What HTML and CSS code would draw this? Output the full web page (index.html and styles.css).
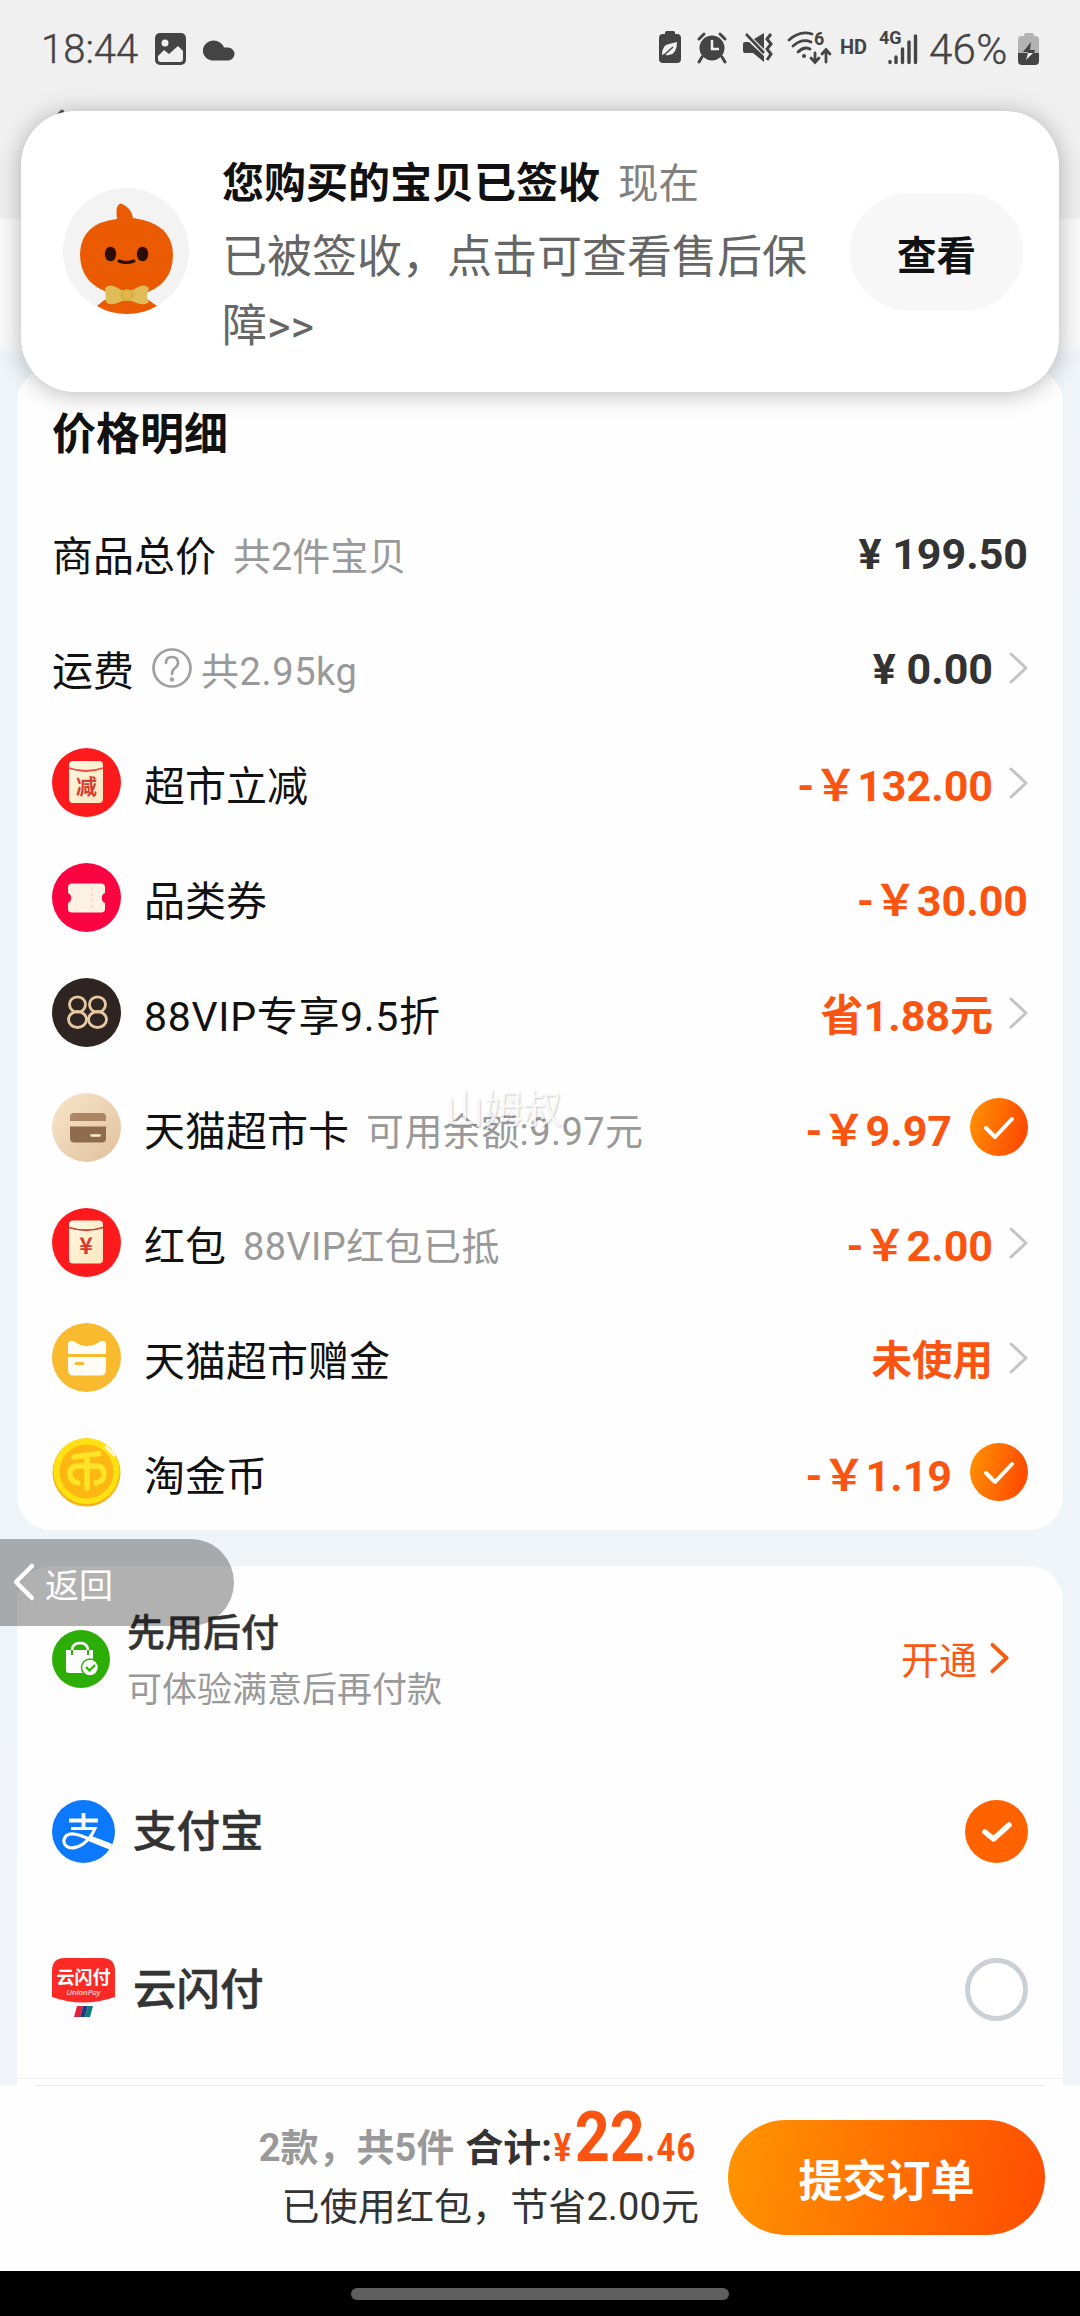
FILE: index.html
```html
<!DOCTYPE html>
<html lang="zh-CN">
<head>
<meta charset="utf-8">
<title>确认订单</title>
<link rel="stylesheet" href="styles.css">
</head>
<body>
<svg width="0" height="0" class="defs">
  <defs>
    <linearGradient id="orange" x1="0" y1="0" x2="1" y2="0.25"><stop offset="0" stop-color="#ff9500"/><stop offset="1" stop-color="#ff4d00"/></linearGradient>
    <linearGradient id="cream" x1="0" y1="0" x2="1" y2="1"><stop offset="0" stop-color="#fff8e4"/><stop offset="1" stop-color="#fbe6bb"/></linearGradient>
    <linearGradient id="beige" x1="0" y1="0" x2="1" y2="1"><stop offset="0" stop-color="#fae6cc"/><stop offset="1" stop-color="#dfc09c"/></linearGradient>
    <symbol id="chev" viewBox="0 0 20 34"><path d="M2 3 L17 17 L2 31" fill="none" stroke="currentColor" stroke-linecap="round" stroke-linejoin="round"/></symbol>
    <symbol id="check" viewBox="0 0 58 58"><circle cx="29" cy="29" r="29" fill="url(#orange)"/><path d="M16 30 L25 39 L42 21" fill="none" stroke="#fff" stroke-width="4" stroke-linecap="round" stroke-linejoin="round"/></symbol>
  </defs>
</svg>
<div class="phone">
  <header class="top">
    <div class="status">
      <span class="clock">18:44</span>
      <svg class="s-img" width="32" height="32" viewBox="0 0 32 32"><rect width="31" height="32" rx="5" fill="#444"/><circle cx="10" cy="10" r="3.5" fill="#f0f0f0"/><path d="M3 23 L9 17 L14 21 L23 13 L28 18 V26 Q28 29 25 29 H6 Q3 29 3 26Z" fill="#f0f0f0"/></svg>
      <svg class="s-cloud" width="33" height="24" viewBox="0 0 33 24"><path d="M11 23.500 A10 10 0 0 1 1 12 A11 11 0 0 1 22 10.500 H26 A6.500 6.500 0 0 1 26 23.500Z" fill="#444"/></svg>
      <span class="grow"></span>
      <svg class="s-right" width="265" height="36" viewBox="0 0 265 36">
        <g fill="#444">
          <path d="M6 3 V1.500 Q6 0 7.500 0 H14.500 Q16 0 16 1.500 V3 H18 Q22 3 22 7 V28 Q22 32 18 32 H4 Q0 32 0 28 V7 Q0 3 4 3Z"/>
          <path d="M3 24 Q3 14 10 13 L18 11 Q18 23 10 24 Q7 25 6 23Z" fill="#f0f0f0"/><path d="M4 25 L14 16" stroke="#444" stroke-width="1.500"/>
          <circle cx="53" cy="17" r="12.500"/><path d="M43 26 L40 31 M63 26 L66 31 M40 8 L45 3 M66 8 L61 3" stroke="#444" stroke-width="3" stroke-linecap="round"/><path d="M53 9 V18 H60" stroke="#f0f0f0" stroke-width="2.500" fill="none"/>
          <path d="M84 13 Q84 11 86 11 H90 L105 25 V31 L94 22 H86 Q84 22 84 20Z M95 8 L105 2 V18Z"/><path d="M87 3 L105 22" stroke="#444" stroke-width="2.600"/><path d="M112 3 L108 8 L112 13 L108 18 L112 23 L108 29" fill="none" stroke="#444" stroke-width="3"/>
        </g>
        <g fill="none" stroke="#444" stroke-width="2.800" stroke-linecap="round">
          <path d="M130 9 Q141 -1 153 3 M134 15 Q143 7 152 11 M139 21 Q145 15 151 18"/>
          <path d="M156 22 V31 M152 27 L156 31.500 L160 27 M167 31 V19 M163 23 L167 18.500 L171 23"/>
        </g>
        <circle cx="145" cy="25" r="2" fill="#444"/>
        <text x="155" y="14" class="st6">6</text>
        <text x="181" y="23" class="sthd">HD</text>
        <text x="220" y="13" class="st4g">4G</text>
        <path d="M231 30.500 V31.500 M237 26 V31.500 M243.500 18 V31.500 M250 11 V31.500 M256.500 5 V31.500" stroke="#444" stroke-width="3.400" stroke-linecap="round"/>
      </svg>
      <span class="pct">46%</span>
      <svg class="s-bat" width="22" height="32" viewBox="0 0 22 32"><path d="M6 3 Q6 0 8 0 H14 Q16 0 16 3 H18 Q21 3 21 7 V20 H0 V7 Q0 3 3 3Z" fill="#b3b3b3"/><path d="M0 20 H21 V28 Q21 32 17 32 H4 Q0 32 0 28Z" fill="#444"/><path d="M13 9 L5 19 H10 V20 H16 L17 17 H12Z" fill="#444"/><path d="M10 20 L8 27 L15 20Z" fill="#eee"/></svg>
    </div>
    <div class="nav"><svg width="600" height="40" viewBox="0 0 600 40"><path d="M18 4 L2 20 L18 36" fill="none" stroke="#555" stroke-width="4.500" stroke-linecap="round"/><path d="M420 4 h4 M475 4 h4 M560 4 h2 M581 4 h2" stroke="#555" stroke-width="2"/></svg></div>
  </header>

  <section class="notice">
    <svg class="avatar" width="126" height="128" viewBox="0 0 126 128">
      <circle cx="63" cy="63" r="63" fill="#f3f3f3"/>
      <path d="M34 118 Q45 107 63 106 Q81 107 94 118 Q80 126 64 126 Q47 126 34 118Z" fill="#ea5a00"/>
      <path d="M54 31 Q52 16 58 15.500 Q69 20 70 30 Q109 35 110 66 Q110 98 78 106 H50 Q17 97 17 66 Q18 35 54 31Z" fill="#ea5a00"/>
      <ellipse cx="47.500" cy="66" rx="5.700" ry="7.300" fill="#2c0d08"/><ellipse cx="79.500" cy="66" rx="5.700" ry="7.300" fill="#2c0d08"/>
      <path d="M56 73 Q63 76 71 73" fill="none" stroke="#2c0d08" stroke-width="3" stroke-linecap="round"/>
      <path d="M42 100 Q47 94 58 102 H70 Q81 94 86 100 Q82 108 86 114 Q81 119 69 113 H59 Q47 119 43 114Z" fill="#e0bc58"/><circle cx="64" cy="107" r="5.500" fill="#e2b64c" stroke="#cda33c"/>
    </svg>
    <div class="notice-text">
      <div class="notice-head"><b>您购买的宝贝已签收</b><span>现在</span></div>
      <p>已被签收，点击可查看售后保障&gt;&gt;</p>
    </div>
    <button class="look">查看</button>
  </section>

  <main class="content">
    <section class="card prices">
      <h2>价格明细</h2>
      <div class="row"><span class="label">商品总价</span><span class="sub">共2件宝贝</span><b class="val dark">¥ 199.50</b></div>
      <div class="row"><span class="label">运费</span>
        <svg class="help" width="40" height="40" viewBox="0 0 40 40"><circle cx="20" cy="20" r="18.500" fill="none" stroke="#a0a0a0" stroke-width="2.700"/><path d="M14 15 Q14 9 20 9 Q26 9 26 15 Q26 18 23 20 Q20 22 20 26" fill="none" stroke="#a0a0a0" stroke-width="2.700" stroke-linecap="round"/><circle cx="20" cy="31.500" r="2.200" fill="#a0a0a0"/></svg>
        <span class="sub ship">共2.95kg</span><b class="val dark">¥ 0.00</b><svg class="chev"><use href="#chev"/></svg></div>
      <div class="row">
        <svg class="ico" viewBox="0 0 69 69"><circle cx="34.500" cy="34.500" r="34.500" fill="#fd1a1c"/><rect x="17" y="13" width="34" height="42" rx="4" fill="url(#cream)"/><path d="M17 20 Q34 26 51 20" fill="none" stroke="#e8503a" stroke-width="1.800"/><text x="34.500" y="46" class="i-jian">减</text></svg>
        <span class="label">超市立减</span><b class="val">-￥132.00</b><svg class="chev"><use href="#chev"/></svg></div>
      <div class="row">
        <svg class="ico" viewBox="0 0 69 69"><circle cx="34.500" cy="34.500" r="34.500" fill="#fc0441"/><path d="M20 20.500 H49 Q53 20.500 53 24 V30 A5.500 5.500 0 0 0 53 40 V46 Q53 49.500 49 49.500 H20 Q16 49.500 16 46 V40 A5.500 5.500 0 0 0 16 30 V24 Q16 20.500 20 20.500Z" fill="#fdf1e4"/><path d="M40 24 V47" stroke="#f7d3c5" stroke-width="1.500" stroke-dasharray="3 3"/></svg>
        <span class="label">品类券</span><b class="val">-￥30.00</b></div>
      <div class="row">
        <svg class="ico" viewBox="0 0 69 69"><circle cx="34.500" cy="34.500" r="34.500" fill="#2e2522"/><g fill="none" stroke="#e6c9a0" stroke-width="2.800"><ellipse cx="25.500" cy="26.500" rx="8" ry="7.700"/><ellipse cx="45.500" cy="26.500" rx="8" ry="7.700"/><ellipse cx="25.500" cy="41.500" rx="9" ry="8"/><ellipse cx="45.500" cy="41.500" rx="9" ry="8"/></g></svg>
        <span class="label vip">88VIP专享9.5折</span><b class="val">省1.88元</b><svg class="chev"><use href="#chev"/></svg></div>
      <div class="row">
        <svg class="ico" viewBox="0 0 69 69"><circle cx="34.500" cy="34.500" r="34.500" fill="url(#beige)"/><path d="M18 28 V24 Q18 20 22 20 H50 Q54 20 54 24 V28Z" fill="#ab8664"/><path d="M18 33.500 H54 V45 Q54 49.500 50 49.500 H22 Q18 49.500 18 45Z" fill="#8f6b4e"/><path d="M39.500 42.500 H47.500" stroke="#fdebd5" stroke-width="2.500" stroke-linecap="round"/></svg>
        <span class="label">天猫超市卡</span><span class="sub wide">可用余额:9.97元</span><b class="val">-￥9.97</b><svg class="tick"><use href="#check"/></svg></div>
      <div class="row">
        <svg class="ico" viewBox="0 0 69 69"><circle cx="34.500" cy="34.500" r="34.500" fill="#fd1a1c"/><rect x="17" y="12.500" width="34" height="43" rx="4" fill="url(#cream)"/><path d="M17 19.500 Q34 25 51 19.500" fill="none" stroke="#c5452f" stroke-width="1.800"/><text x="34" y="46" class="i-yen">¥</text></svg>
        <span class="label">红包</span><span class="sub wide">88VIP红包已抵</span><b class="val">-￥2.00</b><svg class="chev"><use href="#chev"/></svg></div>
      <div class="row">
        <svg class="ico" viewBox="0 0 69 69"><circle cx="34.500" cy="34.500" r="34.500" fill="#f9ba30"/><path d="M16 31 V20 Q18 16 23 19 Q28 23 35 23 Q42 23 47 19 Q52 16 54 20 V31Z M16 34 H54 V47 Q54 52.500 48.500 52.500 H21.500 Q16 52.500 16 47Z" fill="#fffdf4"/><path d="M24 40.500 H31" stroke="#f9ba30" stroke-width="3" stroke-linecap="round"/></svg>
        <span class="label">天猫超市赠金</span><b class="val unused">未使用</b><svg class="chev"><use href="#chev"/></svg></div>
      <div class="row">
        <svg class="ico" viewBox="0 0 69 69"><circle cx="34.500" cy="34.500" r="34" fill="#f5b21a"/><circle cx="34.500" cy="33" r="33" fill="#ffe010"/><circle cx="34.500" cy="33.500" r="27" fill="#fdb713"/><g fill="none" stroke="#ffe326" stroke-width="5.500" stroke-linecap="round"><path d="M22 19 L47 15.500 M35 18 V50 M26 45 Q18 43 18 36.500 Q18 28 26 28 H44 Q52 28 52 36.500 Q52 43 44 45"/></g><path d="M54 9 L62 17" stroke="#fff8d0" stroke-width="3" stroke-linecap="round"/></svg>
        <span class="label">淘金币</span><b class="val">-￥1.19</b><svg class="tick"><use href="#check"/></svg></div>
      <span class="mark">山姆叔</span>
    </section>

    <section class="card pay">
      <div class="pay-later">
        <svg class="bag" width="58" height="58" viewBox="0 0 58 58"><circle cx="29" cy="29" r="29" fill="#2cae07"/><path d="M14 20 H41 V39 L32 43 H17 Q14 43 14 40Z" fill="#fff"/><path d="M20 25 V21 Q20 13 28 13 Q36 13 36 21 V25" fill="none" stroke="#fff" stroke-width="2.500"/><path d="M20 20 V25 M36 20 V25" stroke="#2cae07" stroke-width="2"/><circle cx="38" cy="37.500" r="8.500" fill="#fff" stroke="#2cae07" stroke-width="1.500"/><path d="M34 37 L37.500 40.500 L43 35" fill="none" stroke="#2cae07" stroke-width="2.200"/></svg>
        <div class="pl-text"><b>先用后付</b><span>可体验满意后再付款</span></div>
        <span class="open">开通</span><svg class="chev-o"><use href="#chev"/></svg>
      </div>
      <div class="pay-row">
        <svg width="63" height="63" viewBox="0 0 63 63"><defs><clipPath id="ali"><circle cx="31.500" cy="31.500" r="31.500"/></clipPath></defs><g clip-path="url(#ali)"><rect width="63" height="63" fill="#0c78fb"/><g fill="none" stroke="#fff"><path d="M17 20.500 H46 M31.500 13 V29" stroke-width="3.800"/><path d="M19 28.500 H43 Q39 38 31 44 Q24 49 17 47.500 Q11 45 12 39.500 Q14 33 22 34 Q29 35 39 40 L63 50" stroke-width="3.200"/><path d="M38 38.500 L64 48.500" stroke-width="6"/></g></g></svg>
        <b>支付宝</b>
        <svg class="radio" viewBox="0 0 63 63"><circle cx="31.500" cy="31.500" r="31.500" fill="#ff6200"/><path d="M20 32 L28.500 39 L44 25" fill="none" stroke="#fff" stroke-width="5.500" stroke-linecap="round" stroke-linejoin="round"/></svg>
      </div>
      <div class="pay-row">
        <svg width="63" height="63" viewBox="0 0 63 63"><path d="M0 13 Q0 0 13 0 H50 Q63 0 63 13 V39 Q31 50 0 39Z" fill="#fb2a26"/><text x="31.500" y="26" class="u-cn">云闪付</text><text x="31.500" y="37" class="u-en">UnionPay</text><path d="M25 48 H31 L28 59 H22Z" fill="#e2213c"/><path d="M31 48 H36 L33 59 H28Z" fill="#1e3d80"/><path d="M36 48 H41 L38 59 H33Z" fill="#10797a"/></svg>
        <b>云闪付</b>
        <svg class="radio" viewBox="0 0 63 63"><circle cx="31.500" cy="31.500" r="29" fill="#fff" stroke="#cbd0d7" stroke-width="5"/></svg>
      </div>
      <div class="sep"></div>
    </section>
  </main>

  <div class="back"><svg width="22" height="38" viewBox="0 0 22 38"><path d="M19 3 L3 19 L19 35" fill="none" stroke="#fff" stroke-width="4.500" stroke-linecap="round" stroke-linejoin="round"/></svg><span>返回</span></div>

  <div class="rule"></div>
  <footer class="bar">
    <div class="sum">
      <div class="l1"><span class="cnt">2款，共5件</span><span class="tot">合计:</span><span class="money"><i>¥</i><em>22</em><i class="dec">.46</i></span></div>
      <div class="l2">已使用红包，节省2.00元</div>
    </div>
    <button class="submit">提交订单</button>
  </footer>
  <div class="home"><span></span></div>
</div>
</body>
</html>
```
FILE: styles.css
```css
* { box-sizing: border-box; margin: 0; padding: 0; }
body { width: 1080px; height: 2316px; overflow: hidden; font-family: Roboto, "Noto Sans CJK SC", sans-serif; color: #111; }
svg { display: block; flex: none; overflow: visible; }
button { border: 0; font: inherit; flex: none; }
i, em { font-style: normal; }
.defs { position: absolute; }
.phone { position: relative; width: 1080px; height: 2316px; display: flex; flex-direction: column; overflow: hidden; background: #f0f4f8; white-space: nowrap; }

.top { height: 219px; background: #f0f0f0; flex: none; }
.status { height: 98px; display: flex; align-items: center; padding: 0 40px 0 41px; color: #444; font-size: 40px; }
.clock { font-weight: 300; -webkit-text-stroke: .4px #444; }
.grow { flex: 1; }
.s-img { margin-left: 17px; }
.s-cloud { margin-left: 15px; }
.pct { margin: 0 6px 0 5px; font-size: 42px; font-weight: 300; -webkit-text-stroke: .4px #444; width: 83px; letter-spacing: .3px; }
.st6, .sthd, .st4g { font-family: Roboto, sans-serif; font-weight: 700; fill: #444; }
.st6 { font-size: 18px; }
.sthd { font-size: 20px; }
.st4g { font-size: 18px; }
.nav { height: 60px; display: flex; align-items: center; padding: 0 44px; }

.notice { position: absolute; left: 21px; top: 111px; width: 1038px; height: 281px; z-index: 3; border-radius: 54px; background: #fff; box-shadow: 0 2px 24px rgba(0,0,0,.28); display: flex; align-items: flex-start; padding: 0 36px 0 42px; }
.avatar { margin-top: 77px; }
.notice-text { margin-left: 33px; padding-top: 42px; width: 593px; }
.notice-head { display: flex; gap: 18px; font-size: 42px; line-height: 62px; }
.notice-head span { color: #808080; font-size: 40.500px; }
.notice-text p { font-size: 45px; line-height: 69px; color: #666; white-space: normal; margin-top: 8px; }
.look { width: 173px; height: 118px; margin: 82px 0 0 auto; border-radius: 59px; background: #f7f7f7; color: #111; font-size: 39.500px; font-weight: 700; }

.content { flex: 1; padding: 0 17px; background: linear-gradient(#fafafa 0, #fafafa 122px, #eff4f8 138px, #f0f4f8 100%); }
.card { background: #fefefe; border-radius: 34px; }
.prices { position: relative; margin-top: 149px; height: 1162px; padding: 35px 35px 0 35px; }
h2 { font-size: 44px; line-height: 64px; }
.prices h2 + .row { margin-top: 28px; }
.row { height: 115px; display: flex; align-items: center; }
.ico { width: 69px; height: 69px; margin-right: 23px; }
.label { font-size: 41px; line-height: 60px; margin-top: 8px; }
.vip { letter-spacing: .7px; }
.sub { font-size: 38px; line-height: 60px; margin: 8px 0 0 17px; color: #999; }
.wide { letter-spacing: .4px; }
.help { margin-left: 18px; }
.ship { margin-left: 9px; letter-spacing: .6px; }
.val { margin-left: auto; font-size: 43px; line-height: 60px; color: #fa5410; margin-top: 6px; }
.unused { font-size: 40.500px; }
.dark { color: #333; margin-top: 3px; }
.chev { width: 20px; height: 34px; margin-left: 16px; margin-right: -1px; color: #c3c3c3; stroke-width: 3px; }
.tick { width: 58px; height: 58px; margin-left: 18px; margin-top: -1px; }
.mark { position: absolute; left: 428px; top: 710px; font-size: 39px; color: rgba(255,255,255,.85); text-shadow: 1px 1px 2px rgba(0,0,0,.2); }
.i-jian, .i-yen { font-family: "Noto Sans CJK SC", sans-serif; font-weight: 700; text-anchor: middle; fill: #d83a30; font-size: 21px; }
.i-yen { font-size: 23px; }

.pay { margin-top: 36px; height: 519px; padding: 0 35px; border-radius: 34px 34px 0 0; display: flex; flex-direction: column; }
.pay-later { height: 186px; display: flex; align-items: center; }
.pl-text { margin: 5px 0 0 17px; display: flex; flex-direction: column; color: #333; }
.pl-text b { font-size: 38px; line-height: 58px; font-weight: 500; -webkit-text-stroke: .4px #333; }
.pl-text span { font-size: 35px; line-height: 58px; color: #999; }
.open { margin: -3px 0 0 auto; color: #f75a12; font-size: 38px; }
.chev-o { width: 20px; height: 32px; margin: -2px 18px 0 13px; color: #f75a12; stroke-width: 4px; }
.pay-row { height: 158px; display: flex; align-items: center; }
.pay-row b { margin: -6px 0 0 18px; font-size: 43.500px; color: #333; font-weight: 500; -webkit-text-stroke: .5px #333; }
.radio { width: 63px; height: 63px; margin-left: auto; }
.u-cn { font: 700 18px "Noto Sans CJK SC", sans-serif; text-anchor: middle; fill: #fff; }
.u-en { font: italic 8px "Open Sans", sans-serif; text-anchor: middle; fill: #fff; }
.sep { height: 1px; background: #eee; margin: 10px -35px 0; }

.back { position: absolute; left: 0; top: 1539px; width: 234px; height: 87px; z-index: 2; border-radius: 0 44px 44px 0; background: rgba(0,0,0,.3); color: #fff; display: flex; align-items: center; padding-left: 13px; gap: 10px; font-size: 34px; }
.back svg { margin-top: -2px; }
.back span { margin-top: 2px; }

.rule { height: 1px; flex: none; background: linear-gradient(90deg, #fefefe 35px, #ececec 35px, #ececec 1045px, #fefefe 1045px); }
.bar { height: 185px; background: #fefefe; flex: none; display: flex; align-items: flex-start; justify-content: flex-end; padding: 34px 35px 0 0; }
.sum { margin-right: 29px; display: flex; flex-direction: column; align-items: flex-end; color: #333; }
.l1 { display: flex; align-items: baseline; height: 60px; line-height: 60px; margin-top: -13px; font-weight: 700; font-size: 38px; }
.cnt { color: #999; margin-right: 11px; }
.money { color: #fa5410; display: flex; align-items: baseline; width: 147px; transform: scaleX(.86); transform-origin: left; }
.money i { font-size: 38px; margin-left: 2px; }
.money em { font-size: 71px; margin-left: 4px; }
.money .dec { letter-spacing: 1.500px; margin-left: 1px; }
.l2 { font-size: 38px; line-height: 56px; margin-top: 12px; letter-spacing: .1px; }
.submit { width: 317px; height: 115px; border-radius: 58px; color: #fff; font-size: 44px; font-weight: 700; background: linear-gradient(100deg, #ff9500, #ff4d00); }
.home { height: 45px; background: #000; flex: none; display: flex; justify-content: center; padding-top: 17px; }
.home span { width: 378px; height: 12px; border-radius: 6px; background: #5e5e5e; }
```
